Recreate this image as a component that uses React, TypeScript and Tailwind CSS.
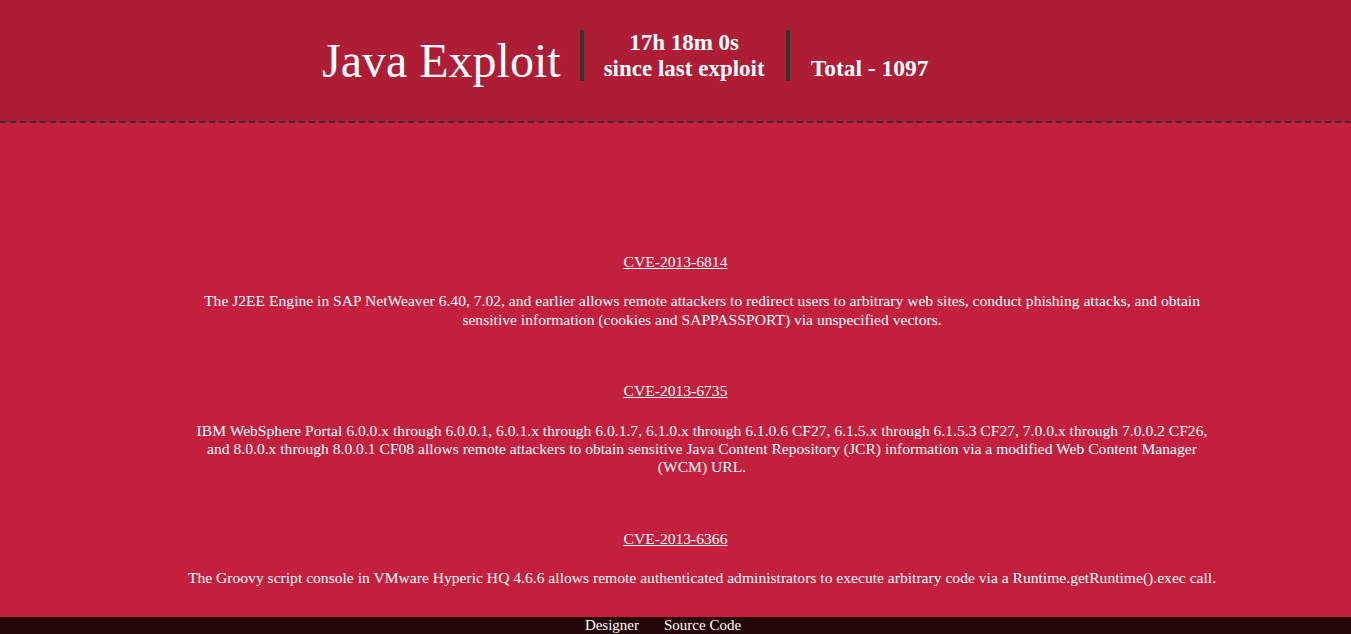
import React from "react";

const items = [
  {
    id: "CVE-2013-6814",
    text: "The J2EE Engine in SAP NetWeaver 6.40, 7.02, and earlier allows remote attackers to redirect users to arbitrary web sites, conduct phishing attacks, and obtain sensitive information (cookies and SAPPASSPORT) via unspecified vectors.",
  },
  {
    id: "CVE-2013-6735",
    text: "IBM WebSphere Portal 6.0.0.x through 6.0.0.1, 6.0.1.x through 6.0.1.7, 6.1.0.x through 6.1.0.6 CF27, 6.1.5.x through 6.1.5.3 CF27, 7.0.0.x through 7.0.0.2 CF26, and 8.0.0.x through 8.0.0.1 CF08 allows remote attackers to obtain sensitive Java Content Repository (JCR) information via a modified Web Content Manager (WCM) URL.",
  },
  {
    id: "CVE-2013-6366",
    text: "The Groovy script console in VMware Hyperic HQ 4.6.6 allows remote authenticated administrators to execute arbitrary code via a Runtime.getRuntime().exec call.",
  },
];

export default function App() {
  return (
    <div
      className="min-h-screen bg-[#c3203e] text-white"
      style={{ fontFamily: '"Liberation Serif", "Times New Roman", serif' }}
    >
      <header className="h-[123px] bg-[#ae1c36] border-b-2 border-dashed border-[#333333] box-border">
        <div className="flex items-start pl-[322px] pt-[30px]">
          <h1 className="mt-[3px] text-[48px] leading-[1.15] font-normal">Java Exploit</h1>
          <div className="ml-[19px] w-[4px] h-[51px] bg-[#333333]" />
          <div className="ml-[20px] text-[23px] leading-[1.15] font-bold text-center">
            <div>17h 18m 0s</div>
            <div>since last exploit</div>
          </div>
          <div className="ml-[21px] w-[4px] h-[51px] bg-[#333333]" />
          <div className="ml-[21px] mt-[25px] text-[23.5px] leading-[1.15] font-bold">
            Total - 1097
          </div>
        </div>
      </header>
      <main className="pt-[130px] pb-[40px] text-[15.6px] leading-[18.4px]">
        {items.map((it, i) => (
          <div key={it.id} className={i === 0 ? "" : "mt-[53px]"}>
            <div className="text-center">
              <a href="#" className="underline">
                {it.id}
              </a>
            </div>
            <p className="mt-[21px] ml-[185px] w-[1034px] text-center">{it.text}</p>
          </div>
        ))}
      </main>
      <footer className="fixed bottom-0 left-0 right-0 h-[17px] bg-[#250609] text-center text-[15px] leading-[17px]">
        <a href="#" className="mr-[25px]">Designer</a>
        <a href="#" className="mr-[25px]">Source Code</a>
      </footer>
    </div>
  );
}
